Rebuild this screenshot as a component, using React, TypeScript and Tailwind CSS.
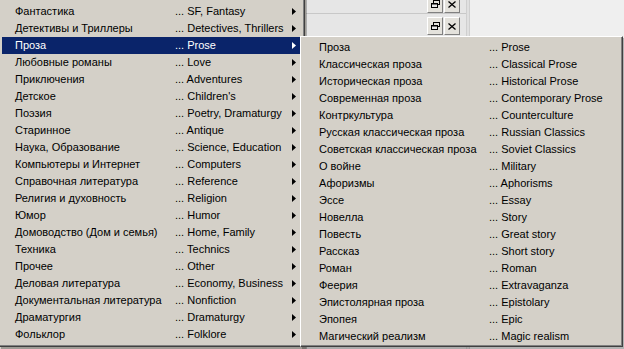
import React from "react";

const mainItems: [string, string][] = [
  ["Фантастика", "... SF, Fantasy"],
  ["Детективы и Триллеры", "... Detectives, Thrillers"],
  ["Проза", "... Prose"],
  ["Любовные романы", "... Love"],
  ["Приключения", "... Adventures"],
  ["Детское", "... Children's"],
  ["Поэзия", "... Poetry, Dramaturgy"],
  ["Старинное", "... Antique"],
  ["Наука, Образование", "... Science, Education"],
  ["Компьютеры и Интернет", "... Computers"],
  ["Справочная литература", "... Reference"],
  ["Религия и духовность", "... Religion"],
  ["Юмор", "... Humor"],
  ["Домоводство (Дом и семья)", "... Home, Family"],
  ["Техника", "... Technics"],
  ["Прочее", "... Other"],
  ["Деловая литература", "... Economy, Business"],
  ["Документальная литература", "... Nonfiction"],
  ["Драматургия", "... Dramaturgy"],
  ["Фольклор", "... Folklore"],
];

const subItems: [string, string][] = [
  ["Проза", "... Prose"],
  ["Классическая проза", "... Classical Prose"],
  ["Историческая проза", "... Historical Prose"],
  ["Современная проза", "... Contemporary Prose"],
  ["Контркультура", "... Counterculture"],
  ["Русская классическая проза", "... Russian Classics"],
  ["Советская классическая проза", "... Soviet Classics"],
  ["О войне", "... Military"],
  ["Афоризмы", "... Aphorisms"],
  ["Эссе", "... Essay"],
  ["Новелла", "... Story"],
  ["Повесть", "... Great story"],
  ["Рассказ", "... Short story"],
  ["Роман", "... Roman"],
  ["Феерия", "... Extravaganza"],
  ["Эпистолярная проза", "... Epistolary"],
  ["Эпопея", "... Epic"],
  ["Магический реализм", "... Magic realism"],
];

function Arrow({ white }: { white?: boolean }) {
  return (
    <svg width="4" height="7" viewBox="0 0 4 7" className="block">
      <path d="M0 0 L4 3.5 L0 7 Z" fill={white ? "#ffffff" : "#000000"} />
    </svg>
  );
}

function RestoreIcon() {
  return (
    <svg width="9" height="8" viewBox="0 0 9 8" className="block">
      <rect x="2.5" y="0.5" width="6" height="4" fill="none" stroke="#000" />
      <rect x="0.5" y="3.5" width="6" height="4" fill="#e8e8e8" stroke="#000" />
      <line x1="0" y1="4" x2="7" y2="4" stroke="#000" />
    </svg>
  );
}

function CloseIcon() {
  return (
    <svg width="8" height="7" viewBox="0 0 8 7" className="block">
      <path d="M0.5 0.5 L7.5 6.5 M7.5 0.5 L0.5 6.5" stroke="#000" strokeWidth="1.3" />
    </svg>
  );
}

function WinBtn({ children }: { children: React.ReactNode }) {
  return (
    <div className="w-[16px] h-[18px] flex items-center justify-center bg-[#e4e2dc] border border-t-white border-l-white border-r-[#808080] border-b-[#808080]">
      {children}
    </div>
  );
}

export default function App() {
  return (
    <div
      className="relative w-[624px] h-[349px] overflow-hidden bg-[#ebebeb] text-[11px] text-black"
      style={{ fontFamily: '"Liberation Sans", Arial, sans-serif' }}
    >
      {/* Background window strip */}
      <div className="flex h-[349px]">
        <div className="w-[306px] bg-[#d4d0c8]" />
        <div className="w-[160px] flex flex-col bg-[#e6e6e6]">
          <div className="h-[14px] border-b border-[#c8c8c8] flex justify-end items-end pr-[6px]">
            <div className="flex gap-[1px] -mt-[10px]">
              <WinBtn><RestoreIcon /></WinBtn>
              <WinBtn><CloseIcon /></WinBtn>
            </div>
          </div>
          <div className="h-[22px] flex justify-end items-center pr-[6px] pt-[2px]">
            <div className="flex gap-[1px]">
              <WinBtn><RestoreIcon /></WinBtn>
              <WinBtn><CloseIcon /></WinBtn>
            </div>
          </div>
        </div>
        <div className="w-[4px] bg-[#e0e0e0] border-l border-r border-[#cfcfcf]" />
        <div className="flex-1 bg-[#efefef]" />
      </div>

      {/* Main menu */}
      <div className="absolute left-[-1px] top-[-14px] w-[306px] h-[361px] bg-[#d4d0c8] border-r border-b border-[#404040] shadow-[2px_2px_0_rgba(0,0,0,0.25)]">
        <div className="h-full border-r border-b border-[#808080] pt-[17px] pl-[3px] pr-[3px]">
          {mainItems.map(([ru, en], i) => {
            const hl = i === 2;
            return (
              <div
                key={ru}
                className={
                  "h-[17px] flex items-center " +
                  (hl ? "bg-[#0a246a] text-white" : "")
                }
              >
                <span className="w-[173px] pl-[13px] whitespace-nowrap">{ru}</span>
                <span className="w-[117px] whitespace-nowrap">{en}</span>
                <Arrow white={hl} />
              </div>
            );
          })}
        </div>
      </div>

      {/* Submenu */}
      <div className="absolute left-[300px] top-[36px] w-[323px] h-[311px] bg-[#d4d0c8] border-t border-l border-white border-r border-b border-r-[#404040] border-b-[#404040] shadow-[2px_2px_0_rgba(0,0,0,0.25)]">
        <div className="h-full border-r border-b border-[#808080] pt-[2px] pl-[1px]">
          {subItems.map(([ru, en]) => (
            <div key={ru} className="h-[17px] flex items-center">
              <span className="w-[187px] pl-[17px] whitespace-nowrap">{ru}</span>
              <span className="whitespace-nowrap">{en}</span>
            </div>
          ))}
        </div>
      </div>
    </div>
  );
}
